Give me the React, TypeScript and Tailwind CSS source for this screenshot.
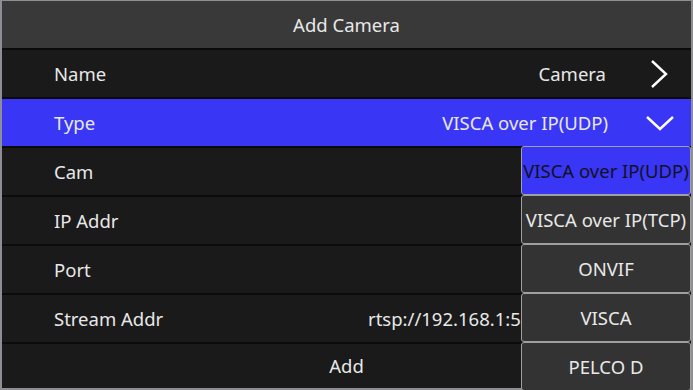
import React from "react";

const rows = [
  { label: "Name", value: "Camera", icon: "right" },
  { label: "Type", value: "VISCA over IP(UDP)", icon: "down", active: true },
  { label: "Cam" },
  { label: "IP Addr" },
  { label: "Port" },
  { label: "Stream Addr", stream: "rtsp://192.168.1:5" },
];

const options = [
  "VISCA over IP(UDP)",
  "VISCA over IP(TCP)",
  "ONVIF",
  "VISCA",
  "PELCO D",
];

function ChevronRight() {
  return (
    <svg width="20" height="30" viewBox="0 0 20 30" className="text-white">
      <path d="M3 2 L17 15 L3 28" fill="none" stroke="currentColor" strokeWidth="2.4" />
    </svg>
  );
}

function ChevronDown() {
  return (
    <svg width="30" height="16" viewBox="0 0 30 16" className="text-white">
      <path d="M2 2 L15 14 L28 2" fill="none" stroke="currentColor" strokeWidth="2.4" />
    </svg>
  );
}

export default function App() {
  return (
    <div
      className="relative w-[693px] h-[390px] overflow-hidden bg-[#8e8e94] pl-[2px] pt-[1px] pr-[2px] pb-[2px] text-[18.5px] text-[#e8e8e8]"
      style={{ fontFamily: '"Noto Sans", "Open Sans", sans-serif' }}
    >
      <div className="flex h-full flex-col bg-[#0b0b0b]">
        {/* header */}
        <div className="flex h-[47px] shrink-0 items-center justify-center bg-[#393939]">
          Add Camera
        </div>

        {rows.map((r) => (
          <div
            key={r.label}
            className={`mt-[2px] flex h-[47px] shrink-0 items-center pl-[52px] ${
              r.active ? "bg-[#3a36f5]" : "bg-[#1a1a1a]"
            }`}
          >
            <span className={r.stream ? "w-[314px] shrink-0" : ""}>{r.label}</span>
            {r.value && <span className="ml-auto">{r.value}</span>}
            {r.icon === "right" && (
              <div className="ml-[43px] mr-[22px] flex w-[20px] justify-center">
                <ChevronRight />
              </div>
            )}
            {r.icon === "down" && (
              <div className="ml-[37px] mr-[16px] flex w-[30px] justify-center">
                <ChevronDown />
              </div>
            )}
            {r.stream && (
              <span className="w-[153px] overflow-hidden whitespace-nowrap">
                {r.stream}
              </span>
            )}
          </div>
        ))}

        <div className="mt-[2px] flex flex-1 items-center justify-center bg-[#1a1a1a]">
          Add
        </div>
      </div>

      {/* type dropdown */}
      <div className="absolute left-[521px] top-[146px] flex w-[170px] flex-col">
        {options.map((o, i) => (
          <div
            key={o}
            className={`flex h-[49px] items-center justify-center rounded-[3px] border border-[#a0a0a0] whitespace-nowrap ${
              i === 0 ? "bg-[#3a36f5] text-[#111122]" : "bg-[#333333] text-[#e8e8e8]"
            }`}
          >
            {o}
          </div>
        ))}
      </div>
    </div>
  );
}
